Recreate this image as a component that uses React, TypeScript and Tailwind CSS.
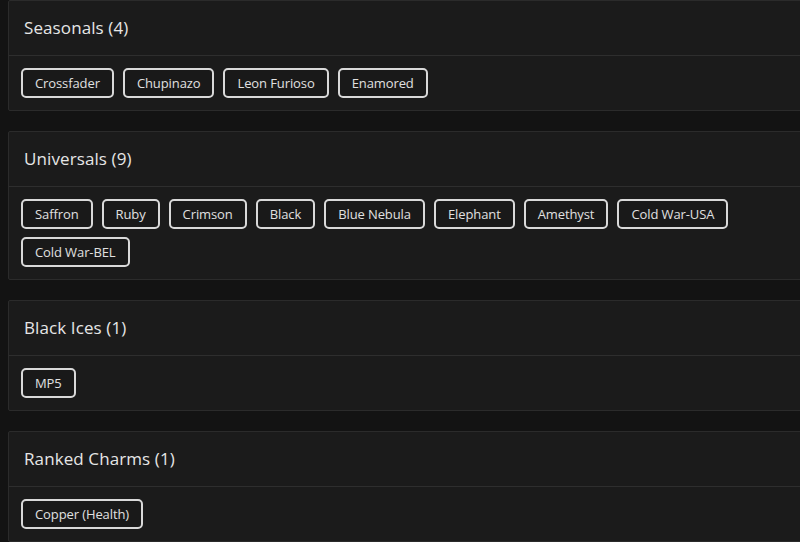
const sections = [
  { title: "Seasonals", items: ["Crossfader", "Chupinazo", "Leon Furioso", "Enamored"] },
  {
    title: "Universals",
    items: ["Saffron", "Ruby", "Crimson", "Black", "Blue Nebula", "Elephant", "Amethyst", "Cold War-USA", "Cold War-BEL"],
  },
  { title: "Black Ices", items: ["MP5"] },
  { title: "Ranked Charms", items: ["Copper (Health)"] },
];

const Section = ({ title, items }: { title: string; items: string[] }) => {
  return (
    <div className="w-[800px] shrink-0 bg-[#1b1b1b] border border-[#2b2b2b] rounded-[2px]">
      <div className="h-[55px] flex items-center px-[15px] border-b border-[#2e2e2e]">
        <h2 className="text-[17px] font-medium text-[#e6e6e6] tracking-[0.1px]">
          {title} ({items.length})
        </h2>
      </div>
      <div className="flex flex-wrap gap-x-[9px] gap-y-2 px-3 pt-3 pb-3">
        {items.map((item) => (
          <button
            key={item}
            className="h-[30px] px-[12px] border-2 border-[#d9d9d9] rounded-[5px] bg-[#191919] text-[13px] text-[#e0e0e0] leading-none tracking-[-0.1px]"
          >
            {item}
          </button>
        ))}
      </div>
    </div>
  );
};

const App = () => {
  return (
    <div
      className="w-[800px] h-[542px] overflow-hidden bg-[#131313] pl-2 flex flex-col gap-5"
      style={{ fontFamily: '"Open Sans", "Liberation Sans", sans-serif' }}
    >
      {sections.map((s) => (
        <Section key={s.title} title={s.title} items={s.items} />
      ))}
    </div>
  );
};

export default App;
